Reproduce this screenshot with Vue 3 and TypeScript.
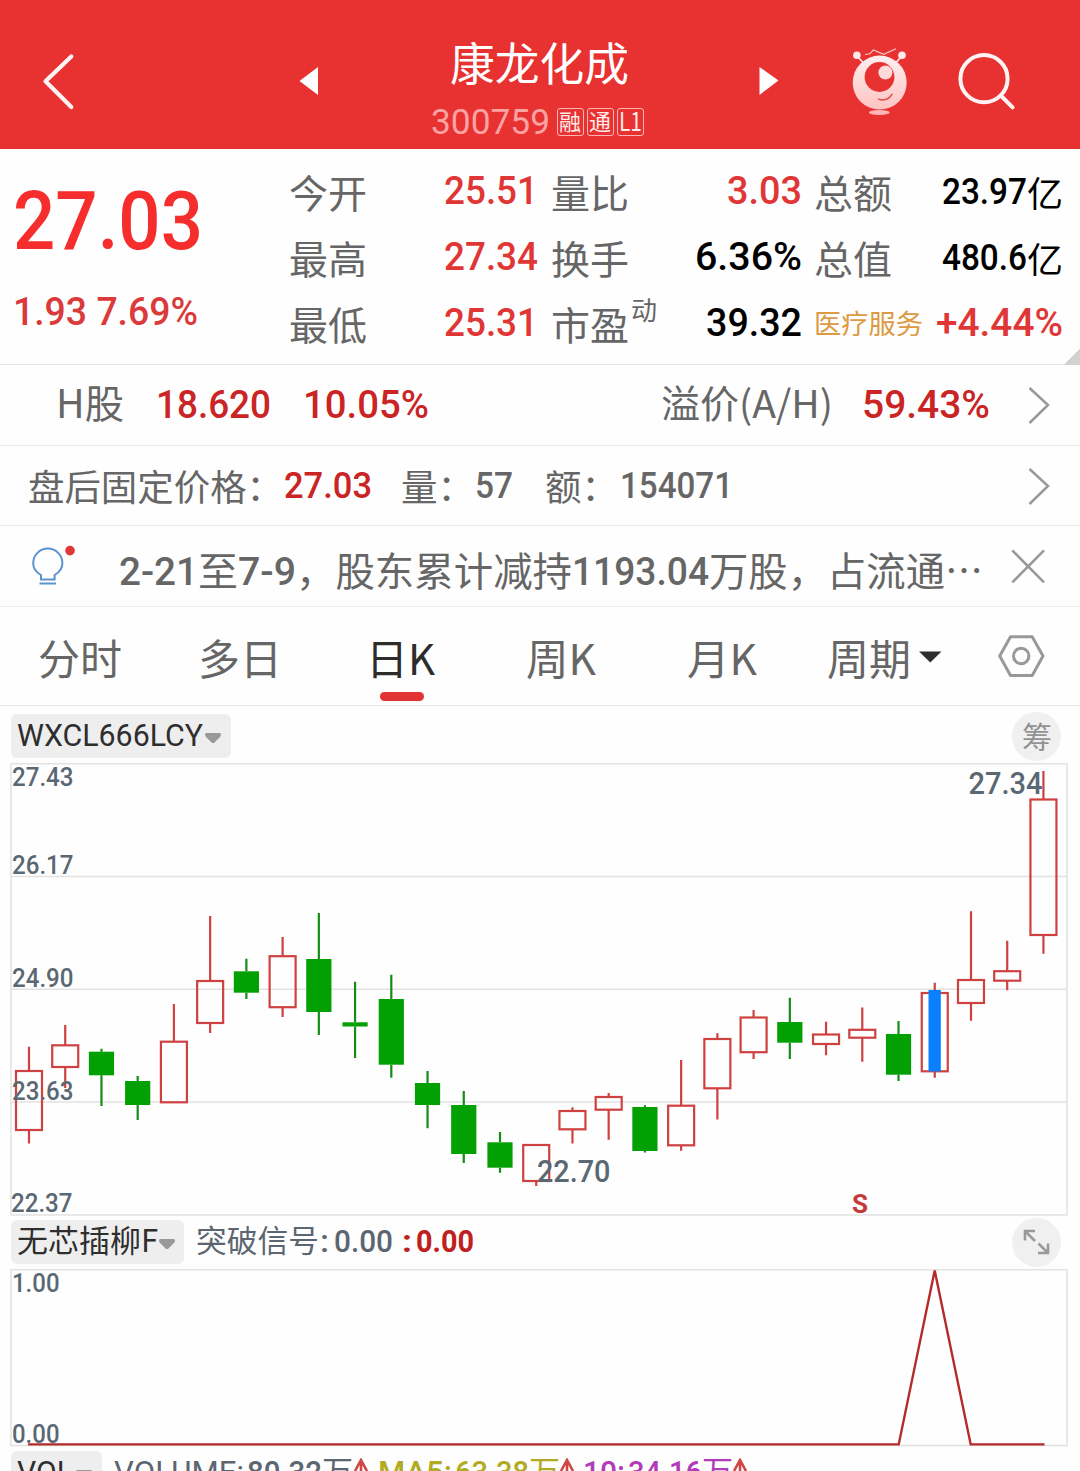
<script setup lang="ts">
import { h, type FunctionalComponent } from 'vue'

interface RunProps {
  t: string
  w: number
  s: number
  cjk?: boolean
  weight?: number
  dy?: number
}

const LATIN = 'Roboto, "Noto Sans CJK SC", sans-serif'
const CJK = '"Noto Sans CJK SC", sans-serif'

/* A run of text fitted to a known width; its bottom edge is the baseline. */
const Run: FunctionalComponent<RunProps> = (p) =>
  h(
    'svg',
    { class: 'run', width: p.w, height: Math.round(p.s * 0.72) },
    h(
      'text',
      {
        x: 0,
        y: Math.round(p.s * 0.72) + (p.dy ?? 0),
        textLength: p.w,
        lengthAdjust: 'spacingAndGlyphs',
        fill: 'currentColor',
        style: {
          fontFamily: p.cjk ? CJK : LATIN,
          fontSize: p.s + 'px',
          fontWeight: p.weight ?? (p.cjk ? 400 : 500),
        },
      },
      p.t,
    ),
  )
Run.props = {
  t: String,
  w: Number,
  s: Number,
  cjk: Boolean,
  weight: Number,
  dy: Number,
} as any

interface Stat {
  label: string
  value: string
  w: number
  tone: 'up' | 'flat'
  unit?: string
  sup?: string
}

const stats: Stat[] = [
  { label: '今开', value: '25.51', w: 94, tone: 'up' },
  { label: '量比', value: '3.03', w: 75, tone: 'up' },
  { label: '总额', value: '23.97', w: 85, tone: 'flat', unit: '亿' },
  { label: '最高', value: '27.34', w: 94, tone: 'up' },
  { label: '换手', value: '6.36%', w: 107, tone: 'flat' },
  { label: '总值', value: '480.6', w: 85, tone: 'flat', unit: '亿' },
  { label: '最低', value: '25.31', w: 94, tone: 'up' },
  { label: '市盈', value: '39.32', w: 96, tone: 'flat', sup: '动' },
  { label: '医疗服务', value: '+4.44%', w: 127, tone: 'up' },
]

const notice: { t: string; w: number; cjk?: boolean }[] = [
  { t: '2-21', w: 79 },
  { t: '至', w: 40, cjk: true },
  { t: '7-9', w: 58 },
  { t: '，股东累计减持', w: 276, cjk: true },
  { t: '1193.04', w: 137 },
  { t: '万股，占流通', w: 236, cjk: true },
  { t: '⋯', w: 38, cjk: true },
]

const tabs = [
  { t: '分时', x: 84, left: 37.5 },
  { t: '多日', x: 84, left: 76.5 },
  { t: '日K', x: 69, left: 84 },
  { t: '周K', x: 70, left: 91 },
  { t: '月K', x: 70, left: 90.5 },
  { t: '周期', x: 84, left: 70.5 },
]
const active = '日K'

type Candle = [up: 0 | 1, high: number, top: number, bottom: number, low: number]

const candles: Candle[] = [
  [1, 1046.7, 1071, 1130, 1143.5],
  [1, 1025, 1045.3, 1067, 1088],
  [0, 1048.7, 1051.7, 1075.3, 1106],
  [0, 1076, 1081, 1105, 1120],
  [1, 1004, 1041.7, 1102.3, 1102.3],
  [1, 916, 981, 1023, 1033],
  [0, 958.7, 971.3, 992.7, 999],
  [1, 937, 956.2, 1007.2, 1017],
  [0, 913, 959, 1012, 1035],
  [0, 981.7, 1022.3, 1026.5, 1058],
  [0, 974.7, 999, 1064.7, 1077.7],
  [0, 1071, 1083, 1105, 1128.3],
  [0, 1091, 1105, 1154, 1163],
  [0, 1132, 1142.3, 1167.7, 1172.7],
  [1, 1145, 1145, 1181, 1186],
  [1, 1107.3, 1111, 1129.3, 1143.5],
  [1, 1093, 1097, 1109.7, 1139.7],
  [0, 1105.3, 1107, 1151, 1152.5],
  [1, 1060, 1105.7, 1145.3, 1150.7],
  [1, 1033.3, 1039, 1088.3, 1119.5],
  [1, 1010, 1017.5, 1052.2, 1059],
  [0, 997.7, 1022, 1042.7, 1059],
  [1, 1021.7, 1034.5, 1044, 1055.3],
  [1, 1007.5, 1029.8, 1037.7, 1061.7],
  [0, 1021, 1034, 1074.7, 1081],
  [1, 982.7, 993, 1071.3, 1077.7],
  [1, 911.3, 980, 1003, 1020.7],
  [1, 940.7, 971.2, 980.7, 990.3],
  [1, 771, 799.5, 935, 953.7],
]
const cx = (i: number) => 29 + i * 36.23

const scale = [
  { t: '27.43', y: 786, x: 12 },
  { t: '26.17', y: 874, x: 12 },
  { t: '24.90', y: 987, x: 12 },
  { t: '23.63', y: 1099.5, x: 12 },
  { t: '22.37', y: 1212, x: 11 },
]
</script>

<template>
  <div class="page">
    <header class="top">
      <svg class="back" width="40" height="60" viewBox="0 0 40 60">
        <path d="M31.3 6.5 5.5 31.2 31.3 57" />
      </svg>
      <svg class="prev" width="20" height="30" viewBox="0 0 20 30"><path d="M.5 15 19 1V29z" /></svg>
      <div class="title">
        <Run t="康龙化成" :w="179" :s="45" cjk />
        <div class="code">
          <Run t="300759" :w="119" :s="35" :weight="400" />
          <span class="tag"><Run t="融" :w="22" :s="22" cjk /></span>
          <span class="tag"><Run t="通" :w="22" :s="22" cjk /></span>
          <span class="tag"><Run t="L1" :w="23" :s="26" cjk :dy="1" /></span>
        </div>
      </div>
      <svg class="next" width="20" height="30" viewBox="0 0 20 30"><path d="M.5 1 19.5 14.5.5 29z" /></svg>
      <svg class="mascot" width="60" height="70" viewBox="850 47 60 70">
        <defs>
          <linearGradient id="skin" x1="0" y1="0" x2="0" y2="1">
            <stop offset="0" stop-color="#fff0f0" />
            <stop offset="1" stop-color="#ffc2c2" />
          </linearGradient>
        </defs>
        <path d="M865 54.5 869.8 53.8 873.3 50 883.7 54.3 896 48.7" stroke="#ffc9c9" stroke-width="1.2" fill="none" />
        <path d="M857 56 863.5 63M902 56 895.5 63" stroke="#ffe9e9" stroke-width="1.8" />
        <circle cx="856.9" cy="55.3" r="3.8" fill="#ffe9e9" />
        <circle cx="902" cy="55.3" r="3.8" fill="#ffe9e9" />
        <circle cx="879.7" cy="82.6" r="27" fill="url(#skin)" />
        <circle cx="879.5" cy="77" r="14.9" fill="#e83131" />
        <circle cx="885.4" cy="72.5" r="7" fill="#ffdada" />
        <path d="M878.3 99.2q9 3 13.8-5" stroke="#e04a4a" stroke-width="1.4" fill="none" stroke-linecap="round" />
        <ellipse cx="879.3" cy="112.6" rx="10.5" ry="2.5" fill="#ffb5b5" />
      </svg>
      <svg class="search" width="64" height="64" viewBox="955 50 64 64">
        <circle cx="984" cy="78.7" r="23.6" />
        <path d="M1000.7 95.5 1012.6 107.4" />
      </svg>
    </header>

    <section class="quote">
      <div class="price">
        <Run class="last" t="27.03" :w="190" :s="81" />
        <Run class="chg" t="1.93 7.69%" :w="185" :s="38.5" />
      </div>
      <div class="stats">
        <div v-for="s in stats" :key="s.label" class="stat">
          <Run v-if="s.label.length > 2" class="sector" :t="s.label" :w="109" :s="27" cjk />
          <Run v-else class="label" :t="s.label" :w="78" :s="39" cjk />
          <Run v-if="s.sup" class="sup" :t="s.sup" :w="26" :s="26" cjk />
          <span class="fill"></span>
          <Run :class="['value', s.tone]" :t="s.value" :w="s.w" :s="s.unit ? 36 : 39.5" />
          <Run v-if="s.unit" class="unit" :t="s.unit" :w="36" :s="35" cjk />
        </div>
      </div>
      <span class="corner"></span>
    </section>

    <section class="line hshare">
      <Run t="H股" :w="68" :s="39" cjk />
      <Run class="deep" t="18.620" :w="115" :s="39.5" />
      <Run class="deep pct" t="10.05%" :w="126" :s="39.5" />
      <span class="fill"></span>
      <Run t="溢价(A/H)" :w="172" :s="38.5" cjk />
      <Run class="deep prem" t="59.43%" :w="128" :s="39.5" />
      <svg class="go" width="24" height="40" viewBox="0 0 24 40"><path d="M3.5 3 22 20 3.5 38" /></svg>
    </section>

    <section class="line after">
      <Run t="盘后固定价格：" :w="255" :s="36.4" cjk :dy="2.5" />
      <Run class="deep" t="27.03" :w="88" :s="36.5" />
      <Run class="k1" t="量：" :w="73" :s="36.4" cjk :dy="2.5" />
      <Run class="k4" t="57" :w="38" :s="36.5" />
      <Run class="k2" t="额：" :w="73" :s="36.4" cjk :dy="2.5" />
      <Run class="k3" t="154071" :w="113" :s="36.5" />
      <span class="fill"></span>
      <svg class="go" width="24" height="40" viewBox="0 0 24 40"><path d="M3.5 3 22 20 3.5 38" /></svg>
    </section>

    <section class="line notice">
      <svg class="bulb" width="48" height="44" viewBox="30 544 48 44">
        <path
          d="M41 579.500V575C36.500 572.500 33.200 568.500 33.200 563.200A14.600 14.600 0 0 1 62.400 563.200C62.400 568.500 59 572.500 54.600 575V579.500ZM39.500 583.500H56"
          fill="none"
          stroke="#5b93d0"
          stroke-width="2"
        />
        <circle cx="70" cy="550.6" r="4.8" fill="#e03636" />
      </svg>
      <div class="words">
        <Run v-for="(n, i) in notice" :key="i" :t="n.t" :w="n.w" :s="39.3" :cjk="n.cjk" :dy="n.cjk ? 1 : 0" />
      </div>
      <span class="fill"></span>
      <svg class="close" width="36" height="36" viewBox="1010 548 36 36">
        <path d="M1012.300 550.300 1044 582.300M1044 550.300 1012.300 582.300" />
      </svg>
    </section>

    <nav class="tabs">
      <div
        v-for="t in tabs"
        :key="t.t"
        class="tab"
        :class="{ on: t.t === active }"
        :style="{ marginLeft: t.left + 'px' }"
      >
        <Run :t="t.t" :w="t.x" :s="42" cjk />
      </div>
      <svg class="drop" width="24" height="12" viewBox="0 0 24 12"><path d="M1 .5H23.500L12.300 11.500z" /></svg>
      <svg class="hex" width="50" height="46" viewBox="997 633 50 46">
        <path d="M1011.500 636.800H1033.200L1044 656 1033.200 675.500H1011.500L1000.700 656z" />
        <circle cx="1022.200" cy="656" r="7.700" />
      </svg>
    </nav>

    <div class="head">
      <div class="chip c1">
        <Run t="WXCL666LCY" :w="186" :s="30.5" :weight="400" />
        <svg width="18" height="12" viewBox="0 0 18 12"><path d="M2 1H16Q18 2.500 16 5L10.500 10.500Q9 11.500 7.500 10.500L2 5Q0 2.500 2 1z" /></svg>
      </div>
      <span class="round"><Run t="筹" :w="30" :s="30" cjk /></span>
    </div>

    <svg class="chart" width="1080" height="453" viewBox="0 763 1080 453">
      <g fill="none" stroke="#e2e2e2" stroke-width="1.500">
        <rect x="11" y="763.750" width="1056" height="451.200" />
        <path d="M11 876.500H1067M11 989.300H1067M11 1102H1067" />
      </g>
      <g v-for="(c, i) in candles" :key="i" :class="c[0] ? 'rise' : 'fall'">
        <path :d="`M${cx(i)} ${c[1]}V${c[2]}M${cx(i)} ${c[3]}V${c[4]}`" />
        <rect
          :x="cx(i) - (c[0] ? 13 : 12.6)"
          :y="c[2]"
          :width="c[0] ? 26 : 25.2"
          :height="c[3] - c[2]"
        />
      </g>
      <rect x="928.500" y="990" width="12.300" height="81.500" fill="#0a80ff" />
      <g class="axis">
        <text v-for="s in scale" :key="s.t" :x="s.x" :y="s.y" textLength="61.500" lengthAdjust="spacingAndGlyphs">{{ s.t }}</text>
        <text class="mark" x="968.500" y="794" textLength="74" lengthAdjust="spacingAndGlyphs">27.34</text>
        <text class="mark" x="537" y="1182" textLength="73.500" lengthAdjust="spacingAndGlyphs">22.70</text>
      </g>
      <text class="sell" x="852" y="1213">S</text>
    </svg>

    <div class="head second">
      <div class="chip c2">
        <Run t="无芯插柳F" :w="141" :s="31" cjk />
        <svg width="18" height="12" viewBox="0 0 18 12"><path d="M2 1H16Q18 2.500 16 5L10.500 10.500Q9 11.500 7.500 10.500L2 5Q0 2.500 2 1z" /></svg>
      </div>
      <Run class="sig" t="突破信号" :w="123" :s="31" cjk />
      <Run class="sig v" t=":" :w="9" :s="31" />
      <Run class="sig z" t="0.00" :w="59" :s="31" />
      <Run class="redsig" t=":" :w="10" :s="31" :weight="700" />
      <Run class="redsig z2" t="0.00" :w="58" :s="31" :weight="700" />
      <span class="round">
        <svg width="28" height="28" viewBox="1023 1228.500 28 28">
          <path d="M1025 1241V1231.500H1035M1025.500 1232 1035 1241.500M1048 1244V1253.500H1038M1047.500 1253 1038.500 1244" />
        </svg>
      </span>
    </div>

    <svg class="chart" width="1080" height="178" viewBox="0 1269 1080 178">
      <rect x="11" y="1269.750" width="1056" height="175.800" fill="none" stroke="#e2e2e2" stroke-width="1.500" />
      <g class="axis">
        <text x="12" y="1291.700" textLength="47.500" lengthAdjust="spacingAndGlyphs">1.00</text>
        <text x="12" y="1443" textLength="47.500" lengthAdjust="spacingAndGlyphs">0.00</text>
      </g>
      <path class="signal" d="M28 1444.400H898.700L934.700 1270.500 970.700 1444.400H1044.500" />
    </svg>

    <div class="head third">
      <div class="chip c3">
        <Run t="VOL" :w="56" :s="30.5" :weight="400" />
        <svg width="18" height="12" viewBox="0 0 18 12"><path d="M2 1H16Q18 2.500 16 5L10.500 10.500Q9 11.500 7.500 10.500L2 5Q0 2.500 2 1z" /></svg>
      </div>
      <div class="vol gray">
        <Run t="VOLUME:" :w="130" :s="30.5" :weight="400" /><Run class="n" t="80.32" :w="75" :s="30.5" /><Run t="万" :w="31" :s="31" cjk />
      </div>
      <svg class="arrow" width="16" height="24" viewBox="0 0 16 24"><path d="M2 13 8 2 14 13M8 2V24" /></svg>
      <div class="vol olive">
        <Run t="MA5:" :w="74" :s="30.5" :weight="500" /><Run class="n" t="63.38" :w="74" :s="30.5" /><Run t="万" :w="31" :s="31" cjk />
      </div>
      <svg class="arrow" width="16" height="24" viewBox="0 0 16 24"><path d="M2 13 8 2 14 13M8 2V24" /></svg>
      <div class="vol purple">
        <Run t="10:" :w="42" :s="30.5" /><Run class="n" t="34.16" :w="74" :s="30.5" /><Run t="万" :w="31" :s="31" cjk />
      </div>
      <svg class="arrow" width="16" height="24" viewBox="0 0 16 24"><path d="M2 13 8 2 14 13M8 2V24" /></svg>
    </div>
  </div>
</template>

<style>
html,
body {
  margin: 0;
  background: #fefefe;
  overflow: hidden;
}
</style>

<style scoped>
.page {
  width: 1080px;
  height: 1471px;
  overflow: hidden;
  background: #fefefe;
  color: #666;
  font-family: Roboto, 'Noto Sans CJK SC', sans-serif;
}
svg {
  display: block;
  flex: none;
}
.run,
.chart {
  overflow: visible;
}
.fill {
  flex: 1;
}
.top {
  display: flex;
  height: 149px;
  background: #e83131;
  color: #fff;
}
.back {
  margin: 50px 0 0 40px;
  fill: none;
  stroke: #fff3f3;
  stroke-width: 4.2;
  stroke-linecap: round;
  stroke-linejoin: round;
}
.prev {
  margin: 66px 0 0 219px;
  fill: #fff;
}
.next {
  margin: 66px 0 0 114px;
  fill: #fff;
}
.title {
  width: 214px;
  margin-left: 112px;
  padding-top: 48.5px;
}
.title > .run {
  margin-left: 19px;
}
.code {
  display: flex;
  margin-top: 27px;
  color: #fba3a2;
}
.code > .run {
  margin: 1.5px 7px 0 -0.5px;
}
.tag {
  box-sizing: border-box;
  width: 27px;
  height: 28px;
  margin-right: 3px;
  flex: none;
  display: flex;
  justify-content: center;
  align-items: flex-end;
  padding-bottom: 5px;
  border: 1px solid #f9b5b5;
  border-radius: 3px;
  color: #ffe9e9;
}
.mascot {
  margin: 47px 0 0 71px;
}
.search {
  margin: 50px 0 0 45px;
  fill: none;
  stroke: #fff3f3;
  stroke-width: 4;
  stroke-linecap: round;
}
.quote {
  position: relative;
  box-sizing: border-box;
  display: flex;
  height: 216px;
  border-bottom: 1px solid #e6e6e6;
}
.price {
  width: 288.5px;
  padding: 42px 0 0 12.5px;
  box-sizing: border-box;
}
.last {
  color: #f52d2d;
}
.chg {
  margin-top: 48px;
  color: #db3a3a;
}
.stats {
  display: grid;
  grid-template-columns: 249.500px 251px 249px;
  grid-auto-rows: 66px;
  column-gap: 12.500px;
  padding-top: 6px;
}
.stat {
  display: flex;
  align-items: flex-end;
}
.label {
  margin-bottom: 13.5px;
}
.sup {
  margin: 0 0 33px 2px;
}
.sector {
  margin-bottom: 19.5px;
  color: #dc9a42;
}
.value {
  margin-bottom: 17px;
}
.unit {
  margin: 0 0 14px;
  color: #000;
}
.up {
  color: #e03636;
}
.flat {
  color: #000;
}
.corner {
  position: absolute;
  right: 0;
  bottom: -1px;
  width: 17px;
  height: 17px;
  background: linear-gradient(135deg, transparent 50%, #d2d2d2 50%);
}
.line {
  display: flex;
  box-sizing: border-box;
  align-items: flex-end;
  border-bottom: 1px solid #ececec;
}
.deep {
  color: #ca2424;
}
.go {
  fill: none;
  stroke: #999;
  stroke-width: 2.5;
}
.hshare {
  height: 80.500px;
  padding: 0 30.500px 26.500px 56px;
}
.hshare .deep {
  margin-left: 32px;
}
.hshare .pct {
  margin-left: 32px;
}
.hshare .prem {
  margin-left: 29px;
}
.hshare .go {
  margin: 0 0 -7px 35.500px;
}
.after {
  height: 80.500px;
  padding: 0 30.500px 27.500px 28px;
}
.after .deep {
  margin-left: 1px;
}
.after .k1 {
  margin-left: 29px;
}
.after .k4 {
  margin-left: 1px;
}
.after .k2 {
  margin-left: 31.500px;
}
.after .k3 {
  margin-left: 2px;
}
.after .go {
  margin-bottom: -8px;
}
.notice {
  height: 81px;
  padding: 0 34px 21px 30px;
}
.bulb {
  margin-bottom: -3px;
}
.words {
  display: flex;
  margin-left: 40.500px;
}
.close {
  margin-bottom: 1px;
  fill: none;
  stroke: #999;
  stroke-width: 2.600;
}
.tabs {
  display: flex;
  box-sizing: border-box;
  height: 99px;
  border-bottom: 1px solid #e8e8e8;
  align-items: flex-start;
}
.tab {
  padding-top: 37.500px;
  position: relative;
}
.tab.on {
  color: #2c2c2c;
}
.tab.on::after {
  content: '';
  position: absolute;
  left: 14px;
  top: 85px;
  width: 44px;
  height: 9px;
  border-radius: 5px;
  background: #e23434;
}
.drop {
  margin: 43.500px 0 0 6.500px;
  fill: #2f2f2f;
}
.hex {
  margin: 26px 0 0 54.500px;
  fill: none;
  stroke: #999;
  stroke-width: 3;
  stroke-linejoin: round;
}
.head {
  box-sizing: border-box;
  display: flex;
  height: 57px;
  padding: 8px 19px 0 11px;
}
.second {
  height: 53px;
  padding-top: 4px;
}
.third {
  padding-top: 4px;
}
.chip {
  box-sizing: border-box;
  display: flex;
  align-items: flex-end;
  height: 44px;
  padding: 0 0 12px 5.500px;
  border-radius: 6px;
  background: #eee;
  color: #2e2e2e;
}
.chip > svg:last-child {
  fill: #999;
  margin-left: 1.500px;
  margin-bottom: 2px;
}
.c1 {
  width: 220px;
}
.c2 {
  width: 173px;
}
.c2 > svg:last-child {
  margin-left: 0;
}
.c3 {
  width: 91px;
}
.c3 > svg:last-child {
  margin-left: 2.500px;
}
.round {
  display: flex;
  justify-content: center;
  align-items: center;
  width: 49px;
  height: 49px;
  margin: -2.500px 0 0 auto;
  border-radius: 50%;
  background: #f0f0f0;
  color: #939393;
  flex: none;
}
.c1 + .round {
  margin-top: -2px;
}
.round path {
  fill: none;
  stroke: #999;
  stroke-width: 2.600;
}
.sig {
  margin: 10px 0 0 12px;
  color: #5c6670;
}
.sig.v {
  margin-left: 1px;
}
.sig.z {
  margin-left: 4.500px;
}
.redsig {
  margin: 10px 0 0 9.500px;
  color: #bf2020;
}
.redsig.z2 {
  margin-left: 4px;
}
.rise {
  fill: none;
  stroke: #cf4040;
  stroke-width: 2.200;
}
.fall {
  fill: #02a002;
  stroke: none;
}
.fall path {
  stroke: #158c15;
  stroke-width: 2.200;
}
.axis {
  fill: #5a6873;
  font: 500 25.500px Roboto, sans-serif;
}
.mark {
  font-size: 30.500px;
}
.sell {
  fill: #c43a3a;
  font: 700 26px Roboto, sans-serif;
}
.signal {
  fill: none;
  stroke: #b52a2a;
  stroke-width: 2.400;
}
.vol {
  display: flex;
  padding-top: 10px;
}
.vol .n {
  margin-left: 3px;
}
.gray {
  margin-left: 12px;
  color: #5c6670;
}
.olive {
  margin-left: 9px;
  color: #b0ab22;
}
.purple {
  margin-left: 8px;
  color: #b13cb9;
}
.arrow {
  margin: 7px 0 0 -0.500px;
  fill: none;
  stroke: #d04545;
  stroke-width: 2.600;
}
.purple + .arrow {
  margin-left: -1.500px;
}
</style>
